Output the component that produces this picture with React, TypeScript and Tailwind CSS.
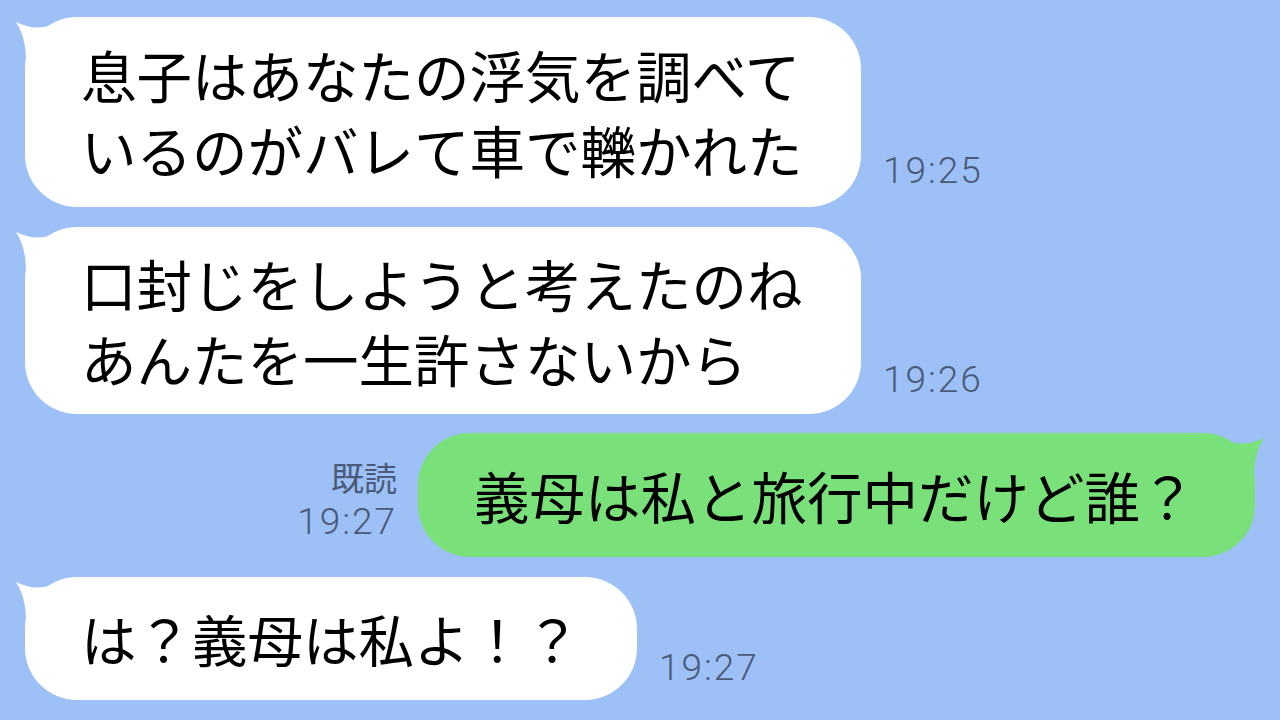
import React from "react";

const JP = { fontFamily: '"Noto Sans CJK JP", "Noto Sans", sans-serif' };
const TS = { fontFamily: 'Roboto, "Noto Sans", sans-serif' };

function LeftTail() {
  return (
    <svg className="absolute left-[-12px] top-0" width="60" height="50" viewBox="-12 0 60 50">
      <path d="M -9 5 C 5 12, 20 13, 38 4 L 38 45 L 1 45 C 1 28, -2 16, -9 5 Z" fill="#ffffff" />
    </svg>
  );
}

function RightTail({ color }: { color: string }) {
  return (
    <svg className="absolute right-[-12px] top-0" width="60" height="50" viewBox="-48 0 60 50">
      <path d="M 9 5 C -5 12, -20 13, -38 4 L -38 45 L -1 45 C -1 28, 2 16, 9 5 Z" fill={color} />
    </svg>
  );
}

function Time({ t }: { t: string }) {
  return (
    <div
      style={TS}
      className="text-[37px] leading-none font-light tracking-[2px] text-[#4a5a78]"
    >
      {t}
    </div>
  );
}

function LeftMsg({
  lines,
  h,
  time,
  w,
  pb,
}: {
  lines: string[];
  h: string;
  time: string;
  w: string;
  pb: string;
}) {
  return (
    <div className="flex items-end gap-[22px]">
      <div className={`relative ${h} ${w} rounded-[52px] bg-white flex flex-col justify-center pl-[56px]`}>
        <LeftTail />
        <div style={JP} className="relative text-[55.5px] leading-[75px] text-black whitespace-nowrap">
          {lines.map((l, i) => (
            <div key={i}>{l}</div>
          ))}
        </div>
      </div>
      <div className={pb}>
        <Time t={time} />
      </div>
    </div>
  );
}

export default function App() {
  return (
    <div className="w-[1280px] h-[720px] overflow-hidden bg-[#9dc0f6] pt-[17px] pl-[25px] pr-[25px] flex flex-col gap-[20px]">
      <LeftMsg
        lines={["息子はあなたの浮気を調べて", "いるのがバレて車で轢かれた"]}
        h="h-[190px]"
        w="w-[836px]"
        time="19:25"
        pb="pb-[18px]"
      />
      <LeftMsg
        lines={["口封じをしようと考えたのね", "あんたを一生許さないから"]}
        h="h-[187px]"
        w="w-[836px]"
        time="19:26"
        pb="pb-[16px]"
      />
      <div className="flex justify-end items-end gap-[21px] -mt-[1px]">
        <div className="flex flex-col items-end pb-[17px]">
          <div style={JP} className="text-[33px] leading-[33px] mb-[9px] text-[#4a5a78]">既読</div>
          <Time t="19:27" />
        </div>
        <div className="relative h-[124px] w-[837px] rounded-[52px] bg-[#7ae07a] flex items-center pl-[56px]">
          <RightTail color="#7ae07a" />
          <div style={JP} className="relative text-[55.5px] leading-[75px] text-black whitespace-nowrap">
            義母は私と旅行中だけど誰？
          </div>
        </div>
      </div>
      <LeftMsg
        lines={["は？義母は私よ！？"]}
        h="h-[123px]"
        w="w-[612px]"
        time="19:27"
        pb="pb-[14px]"
      />
    </div>
  );
}
